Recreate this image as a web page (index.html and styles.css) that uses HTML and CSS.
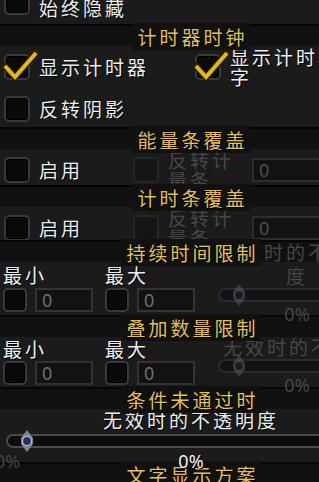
FILE: index.html
```html
<!DOCTYPE html>
<html lang="zh-CN">
<head>
    <meta charset="UTF-8">
    <meta name="viewport" content="width=device-width, initial-scale=1.0">
    <title>计时器设置</title>
    <link rel="stylesheet" href="styles.css">
</head>
<body>
<div class="panel">
    <div class="row row-a">
        <label class="check"><span class="box"></span><span class="text">始终隐藏</span></label>
    </div>

    <div class="heading"><span>计时器时钟</span></div>
    <div class="row row-b">
        <div class="half">
            <label class="check">
                <span class="box">
                    <svg class="tick" width="38" height="32" viewBox="0 0 38 32"><polyline points="3,16 13,27 34,3" fill="none" stroke="#2a1e00" stroke-width="7" stroke-linecap="round"/><polyline points="3,16 13,27 34,3" fill="none" stroke="#e2b91c" stroke-width="4"/></svg>
                </span>
                <span class="text">显示计时器</span>
            </label>
        </div>
        <div class="half">
            <label class="check">
                <span class="box">
                    <svg class="tick" width="38" height="32" viewBox="0 0 38 32"><polyline points="3,16 13,27 34,3" fill="none" stroke="#2a1e00" stroke-width="7" stroke-linecap="round"/><polyline points="3,16 13,27 34,3" fill="none" stroke="#e2b91c" stroke-width="4"/></svg>
                </span>
                <span class="text wrap">显示计时器文字</span>
            </label>
        </div>
    </div>
    <div class="row row-c">
        <label class="check"><span class="box"></span><span class="text">反转阴影</span></label>
    </div>

    <div class="heading"><span>能量条覆盖</span></div>
    <div class="row row-d">
        <div class="col1"><label class="check"><span class="box"></span><span class="text">启用</span></label></div>
        <div class="col2"><label class="check off"><span class="box"></span><span class="text narrow">反转计量条</span></label></div>
        <div class="col3"><input class="field off" type="text" value="0" disabled></div>
    </div>

    <div class="heading"><span>计时条覆盖</span></div>
    <div class="row row-e">
        <div class="col1"><label class="check"><span class="box"></span><span class="text">启用</span></label></div>
        <div class="col2"><label class="check off"><span class="box"></span><span class="text narrow">反转计量条</span></label></div>
        <div class="col3"><input class="field off" type="text" value="0" disabled></div>
    </div>

    <section class="limit limit-dur">
        <div class="heading"><span>持续时间限制</span></div>
        <div class="mm-labels"><span>最小</span><span>最大</span></div>
        <div class="mm-fields">
            <div class="mm-group"><span class="box small"></span><input class="field mm" type="text" value="0"></div>
            <div class="mm-group"><span class="box small"></span><input class="field mm" type="text" value="0"></div>
        </div>
        <div class="slider-off dur">
            <div class="lbl">无效时的不透明度</div>
            <div class="track"><svg class="thumb" width="14" height="22" viewBox="0 0 14 22"><polygon points="7,0 10,4 13,8 13,14 10,18 7,22 4,18 1,14 1,8 4,4" fill="#80848c"/><circle cx="7" cy="11" r="4.5" fill="#22305c" stroke="#c8ccd4" stroke-width="1.2"/></svg></div>
            <div class="val">0%</div>
        </div>
    </section>

    <section class="limit limit-stk">
        <div class="heading"><span>叠加数量限制</span></div>
        <div class="mm-labels"><span>最小</span><span>最大</span></div>
        <div class="mm-fields">
            <div class="mm-group"><span class="box small"></span><input class="field mm" type="text" value="0"></div>
            <div class="mm-group"><span class="box small"></span><input class="field mm" type="text" value="0"></div>
        </div>
        <div class="slider-off stk">
            <div class="lbl">无效时的不透明度</div>
            <div class="track"><svg class="thumb" width="14" height="22" viewBox="0 0 14 22"><polygon points="7,0 10,4 13,8 13,14 10,18 7,22 4,18 1,14 1,8 4,4" fill="#80848c"/><circle cx="7" cy="11" r="4.5" fill="#22305c" stroke="#c8ccd4" stroke-width="1.2"/></svg></div>
            <div class="val">0%</div>
        </div>
    </section>

    <div class="heading"><span>条件未通过时</span></div>
    <div class="opacity-label">无效时的不透明度</div>
    <div class="slider">
        <div class="track"><svg class="thumb" width="14" height="22" viewBox="0 0 14 22"><polygon points="7,0 10,4 13,8 13,14 10,18 7,22 4,18 1,14 1,8 4,4" fill="#80848c"/><circle cx="7" cy="11" r="4.5" fill="#22305c" stroke="#c8ccd4" stroke-width="1.2"/></svg></div>
    </div>
    <div class="values"><span class="min">0%</span><span class="cur">0%</span></div>

    <div class="heading"><span>文字显示方案</span></div>
</div>
</body>
</html>
```

FILE: styles.css
```css
* {
    box-sizing: border-box;
}
html, body {
    margin: 0;
    height: 100%;
    overflow: hidden;
    background-color: #1b1b1b;
}
body {
    font-family: "Noto Sans CJK SC", "Noto Sans", sans-serif;
    font-size: 19px;
    letter-spacing: 3px;
    color: #eeeeee;
}
.panel {
    width: 382px;
    margin-top: -12px;
    text-shadow: 1px 1px 0 #000;
}

/* rows */
.row {
    display: flex;
    align-items: center;
}
.row-a {
    height: 28px;
    margin-bottom: 8px;
    padding-left: 4px;
}
.row-a .text {
    margin-top: 11px;
}
.row-b {
    height: 42px;
    margin-bottom: 1px;
}
.row-c {
    height: 40px;
    margin-bottom: -2px;
    padding-left: 4px;
}
.row-d {
    height: 42px;
    margin-bottom: -6px;
}
.row-e {
    height: 42px;
    margin-bottom: -9px;
}
.half {
    width: 50%;
    padding-left: 4px;
}
.col1 {
    width: 129px;
    padding-left: 4px;
}
.col2 {
    width: 123px;
    padding-left: 4px;
}
.col3 {
    flex: 1;
}

/* checkboxes */
.check {
    display: flex;
    align-items: center;
    gap: 9px;
}
.box {
    position: relative;
    flex: none;
    width: 26px;
    height: 26px;
    border: 2px solid #3a3a3a;
    border-radius: 5px;
    background-color: #0a0a0a;
    box-shadow: inset 0 0 0 1px #000;
}
.box.small {
    width: 24px;
    height: 24px;
}
.tick {
    position: absolute;
    left: -4px;
    top: -6px;
}
.text {
    line-height: 22px;
    white-space: nowrap;
}
.wrap {
    white-space: normal;
    width: 134px;
    line-height: 20px;
}
.narrow {
    white-space: normal;
    width: 68px;
    line-height: 20px;
}
.check.off .box {
    border-color: #262626;
    background-color: #151515;
    box-shadow: none;
}
.check.off .text {
    color: #474747;
    text-shadow: none;
}

/* inputs */
.field {
    display: block;
    height: 24px;
    padding: 0 0 0 5px;
    border: 2px solid #333;
    background-color: #121212;
    color: #6e6e6e;
    font-family: "Noto Sans", sans-serif;
    font-size: 18px;
    letter-spacing: 0;
    line-height: 20px;
    outline: none;
}
.field.off {
    width: 130px;
    border-color: #2e2e2e;
    color: #4e4e4e;
}
.field.mm {
    width: 58px;
}

/* headings */
.heading {
    position: relative;
    height: 22px;
    line-height: 22px;
    text-align: center;
    color: #e4c05a;
    background-color: #111;
    border-top: 2px solid #050505;
}
.heading span {
    position: relative;
    z-index: 3;
    padding: 0 2px 0 5px;
    background-color: #111;
}

/* min / max sections */
.limit {
    position: relative;
    margin-top: 2px;
}
.limit-dur {
    margin-top: 0;
}
.mm-labels {
    display: flex;
    padding-left: 3px;
    height: 25px;
    line-height: 25px;
}
.mm-labels span {
    width: 102px;
}
.mm-fields {
    display: flex;
    align-items: center;
    padding-left: 3px;
    height: 26px;
}
.limit-stk .mm-labels {
    height: 24px;
    line-height: 24px;
}
.limit-stk .mm-fields {
    height: 24px;
    margin-bottom: 2px;
}
.mm-group {
    display: flex;
    align-items: center;
    gap: 8px;
    width: 102px;
}

/* disabled slider column */
.slider-off {
    position: absolute;
    left: 212px;
    width: 170px;
    z-index: 2;
    color: #474747;
    text-shadow: none;
    text-align: center;
    line-height: 24px;
}
.slider-off.dur {
    top: 0;
}
.slider-off.stk {
    top: 20px;
}
.slider-off.stk .lbl {
    white-space: nowrap;
    overflow: hidden;
    text-align: left;
    padding-left: 11px;
}
.slider-off .track {
    margin-top: 0;
    border-color: #2c2c2c;
    background-color: #131313;
}
.slider-off .thumb {
    opacity: 0.3;
}
.val {
    font-family: "Noto Sans", sans-serif;
    font-size: 18px;
    letter-spacing: 0;
}

/* opacity slider */
.opacity-label {
    height: 22px;
    line-height: 22px;
    text-align: center;
}
.slider {
    height: 20px;
    padding-top: 3px;
}
.track {
    position: relative;
    height: 14px;
    margin-left: 6px;
    border: 2px solid #4c4c4c;
    border-right: 0;
    border-radius: 8px 0 0 8px;
    background-color: #0c0c0c;
}
.thumb {
    position: absolute;
    left: 12px;
    top: -6px;
}
.values {
    position: relative;
    z-index: 4;
    height: 11px;
    line-height: 20px;
    text-align: center;
    font-family: "Noto Sans", sans-serif;
    font-size: 18px;
    letter-spacing: 0;
}
.values .min {
    position: absolute;
    left: -5px;
    top: 0;
    color: #444;
    text-shadow: none;
}
.values .cur {
    color: #f2f2f2;
}
```
